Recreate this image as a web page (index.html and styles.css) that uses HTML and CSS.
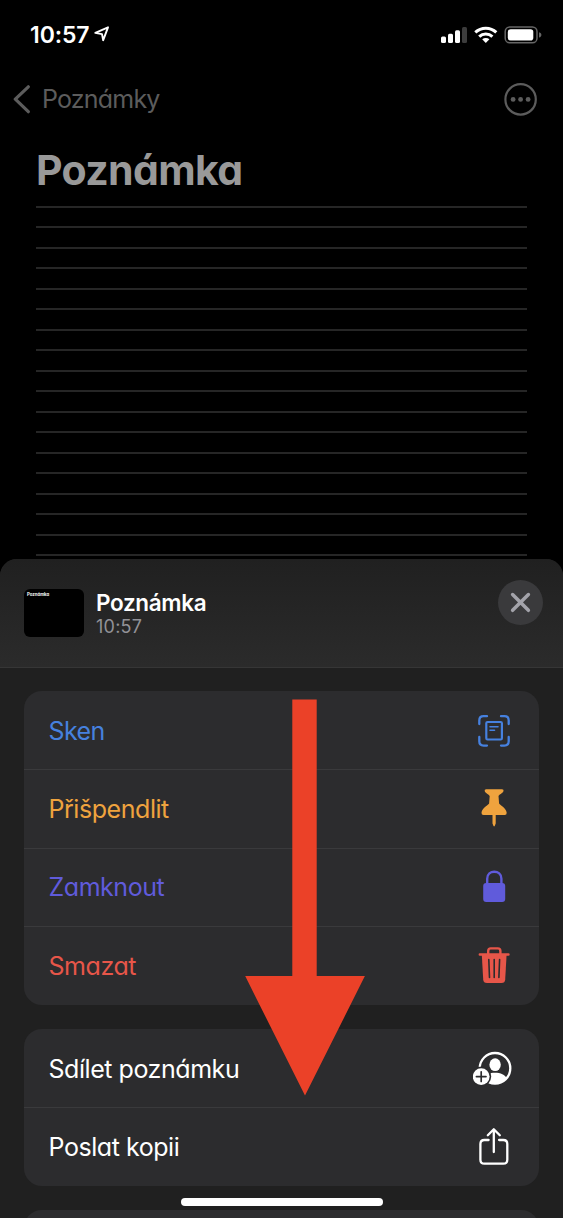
FILE: index.html
```html
<!DOCTYPE html>
<html lang="cs">
<head>
<meta charset="utf-8">
<title>Poznámka</title>
<link rel="stylesheet" href="styles.css">
</head>
<body>
<div class="phone">
  <header class="status">
    <div class="clock"><span class="time">10:57</span>
      <svg class="location" width="16" height="16" viewBox="0 0 16 16"><path d="M1.300 6.900 14 1.300 9.200 14.200 8 8.100Z" fill="none" stroke="#fff" stroke-width="1.900" stroke-linejoin="round"/></svg>
    </div>
    <svg width="104" height="20" viewBox="0 0 104 20">
      <g fill="#fff"><rect x="3" y="10.500" width="5" height="6.500" rx="1.500"/><rect x="10" y="7.700" width="5" height="9.300" rx="1.500"/><rect x="17" y="4.200" width="5" height="12.800" rx="1.500"/></g>
      <rect x="24" y="1" width="5" height="16" rx="1.500" fill="#3c3c3c"/>
      <g fill="none" stroke="#fff" stroke-width="3"><path d="M37.300 6.400a15.200 15.200 0 0 1 21 0"/><path d="M41.200 10.700a9.600 9.600 0 0 1 13.200 0"/></g>
      <path d="M44.200 13.300a5.300 5.300 0 0 1 7.200 0L47.800 17Z" fill="#fff"/>
      <rect x="67.200" y="1" width="31.800" height="15.800" rx="4.600" fill="none" stroke="#666" stroke-width="1.500"/>
      <rect x="69.800" y="3.300" width="25.500" height="11.300" rx="2.800" fill="#fff"/>
      <path d="M101 6.300c3.200 1 3.200 4.200 0 5.200Z" fill="#666"/>
    </svg>
  </header>
  <nav class="nav">
    <div class="back">
      <svg width="18" height="30" viewBox="0 0 18 30"><path d="M16.300 1.800 3.300 14.200l13 12.500" fill="none" stroke="#5c5c5c" stroke-width="3.200" stroke-linecap="round" stroke-linejoin="round"/></svg>
      <span class="back-label">Poznámky</span>
    </div>
    <svg width="34" height="34" viewBox="0 0 34 34"><circle cx="17.600" cy="16.400" r="15.200" fill="none" stroke="#5c5c5c" stroke-width="2.200"/><g fill="#5c5c5c"><circle cx="10.100" cy="16.400" r="2.400"/><circle cx="17.600" cy="16.400" r="2.400"/><circle cx="25.100" cy="16.400" r="2.400"/></g></svg>
  </nav>
  <main class="note">
    <h1 class="note-title">Poznámka</h1>
    <div class="lines"><i></i><i></i><i></i><i></i><i></i><i></i><i></i><i></i><i></i><i></i><i></i><i></i><i></i><i></i><i></i><i></i><i></i><i></i></div>
  </main>
  <section class="sheet">
    <div class="sheet-head">
      <div class="thumb">Poznámka</div>
      <div class="meta"><div class="meta-title">Poznámka</div><div class="meta-time">10:57</div></div>
      <div class="close"><svg width="45" height="45" viewBox="0 0 45 45"><path d="m14.600 14.500 15.800 15.800m0-15.800L14.600 30.300" stroke="#a3a3aa" stroke-width="3.500" stroke-linecap="round"/></svg></div>
    </div>
    <div class="cards">
      <div class="card">
        <div class="row blue"><span class="sken">Sken</span>
          <svg width="42" height="42" viewBox="0 0 42 42" fill="none" stroke="currentColor" stroke-linecap="round"><path d="M6.300 14v-3.500q0-4.300 4.300-4.300H14M28 6.200h3.400q4.300 0 4.300 4.300V14M35.700 27v4.300q0 4.300-4.300 4.300H28M14 35.600h-3.400q-4.300 0-4.300-4.300V27" stroke-width="2.300"/><rect x="13.300" y="12" width="15.600" height="17.500" rx="1.200" stroke-width="2.200"/><path d="M17 16.700h8M17 20.200h4.500" stroke-width="1.600"/></svg></div>
        <div class="row orange"><span class="pin">Přišpendlit</span>
          <svg width="42" height="42" viewBox="0 0 42 42" fill="currentColor"><path d="M13.200 1.200H29q2 0 1.500 1.900c-.5 2.100-4.200 3.500-5 4.900l.6 7.600c.3 1.400 7.300 4.300 7.600 9.200q.1 2.200-2 2.200H10.500q-2.100 0-2-2.200c.3-4.900 7.300-7.800 7.600-9.200l.6-7.600c-.8-1.400-4.500-2.800-5-4.900q-.500-1.900 1.500-1.900ZM19.500 27h3.200v8.600l-1 2.500q-.6.800-1.200 0l-1-2.500Z"/></svg></div>
        <div class="row purple"><span class="lock">Zamknout</span>
          <svg width="42" height="42" viewBox="0 0 42 42"><rect x="10.200" y="17" width="22" height="19" rx="3" fill="currentColor"/><path d="M14.200 18v-5.200c0-9.400 14.200-9.400 14.200 0V18" fill="none" stroke="currentColor" stroke-width="2.400"/></svg></div>
        <div class="row red"><span class="trash">Smazat</span>
          <svg width="42" height="42" viewBox="0 0 42 42"><path d="M6.800 9.500h28.700M15.200 8.500V6q0-2.600 2.600-2.600h7q2.600 0 2.600 2.600v2.500" fill="none" stroke="currentColor" stroke-width="2.400" stroke-linecap="round"/><path d="M8.800 9.500h24.800l-1.400 25q-.2 3.500-3.800 3.500H14q-3.600 0-3.800-3.500Z" fill="currentColor"/><path d="m15.800 14.500.7 18M21.200 14.500v18M26.600 14.500l-.7 18" stroke="#2c2c2e" stroke-width="1.600" stroke-linecap="round"/></svg></div>
      </div>
      <div class="card">
        <div class="row white"><span class="share">Sdílet poznámku</span>
          <svg width="42" height="42" viewBox="0 0 42 42"><circle cx="22" cy="20.300" r="15.300" fill="none" stroke="#fff" stroke-width="2.300"/><ellipse cx="22.100" cy="16.700" rx="5.700" ry="6.400" fill="#fff"/><path d="M10.500 30.500c2-7.600 21-7.600 23 0-5.400 7.200-17.600 7.200-23 0Z" fill="#fff"/><circle cx="8.200" cy="28.600" r="10" fill="#2c2c2e"/><circle cx="8.200" cy="28.600" r="8.400" fill="#fff"/><path d="M3.400 28.600H13M8.200 23.800v9.600" stroke="#2c2c2e" stroke-width="1.700" stroke-linecap="round"/></svg></div>
        <div class="row white"><span class="send">Poslat kopii</span>
          <svg width="42" height="42" viewBox="0 0 42 42" fill="none" stroke="#fff" stroke-width="2.300" stroke-linecap="round" stroke-linejoin="round"><path d="M15.600 14h-4.200q-4 0-4 4v15.700q0 4 4 4h18.900q4 0 4-4V18q0-4-4-4h-4.200M20.800 26V3.500M14.800 9.300l6-6 6 6"/></svg></div>
      </div>
      <div class="card"><div class="row"></div></div>
    </div>
  </section>
  <svg class="arrow" width="120" height="398" viewBox="0 0 120 398"><path d="M47.300.500h24.400v276.600h48.200L60 396.500.200 277.100h47.100Z" fill="#eb4128"/></svg>
  <div class="home"></div>
</div>
</body>
</html>
```
FILE: styles.css
```css
* { box-sizing: border-box; }
body { margin: 0; background: #000; }
.phone { position: relative; width: 563px; height: 1218px; overflow: hidden; background: #000; color: #fff; display: flex; flex-direction: column; font-family: Inter, "Liberation Sans", sans-serif; font-feature-settings: "cv11", "ss03"; }
.phone svg { display: block; flex: none; }
.status { flex: none; height: 70px; display: flex; align-items: flex-start; justify-content: space-between; padding: 22px 21px 0 30px; }
.status > svg { margin-top: 4px; }
.clock { display: flex; gap: 5px; height: 26px; align-items: center; }
.time { font-size: 23px; font-weight: 600; line-height: 26px; letter-spacing: -.1px; }
.location { margin-top: -2px; }
.nav { flex: none; height: 60px; display: flex; align-items: center; justify-content: space-between; padding: 0 26px 0 12px; }
.back { display: flex; align-items: center; gap: 12px; }
.back-label { margin-top: -2px; color: #5c5c5c; font-size: 25px; line-height: 30px; letter-spacing: -.8px; }
.note { flex: none; height: 429px; padding: 15px 36px 0; }
.note-title { margin: 0; height: 61px; font-size: 41px; line-height: 50px; font-weight: 700; letter-spacing: -.65px; color: #999; }
.lines { height: 350px; display: flex; flex-direction: column; justify-content: space-between; }
.lines i { flex: none; height: 2px; background: #262626; }
.sheet { flex: none; height: 659px; border-radius: 17px 17px 0 0; background: #202020; overflow: hidden; display: flex; flex-direction: column; }
.sheet-head { flex: none; height: 109px; background: linear-gradient(#202020, #2b2b2b); border-bottom: 1px solid #363636; display: flex; align-items: flex-start; padding: 0 20px 0 24px; }
.thumb { margin-top: 30px; width: 60px; height: 48px; border-radius: 6px; background: #000; font-size: 4.300px; font-weight: 700; line-height: 5px; padding: 3px; }
.meta { margin: 30px auto 0 12px; }
.meta-title { font-size: 22.5px; font-weight: 600; line-height: 28px; letter-spacing: -.35px; font-feature-settings: normal; }
.meta-time { font-size: 18px; line-height: 20px; letter-spacing: .25px; color: #929297; }
.close { margin-top: 20.500px; width: 45px; height: 45px; border-radius: 50%; background: #3a3a3c; }
.cards { flex: none; padding: 23px 24px 0; display: flex; flex-direction: column; gap: 24.300px; }
.card { flex: none; border-radius: 18px; background: #2c2c2e; overflow: hidden; }
.row { height: 78.400px; display: flex; align-items: center; justify-content: space-between; padding: 1px 24.500px 0 24.500px; font-size: 25px; line-height: 30px; letter-spacing: -.45px; }
.row + .row { border-top: 1px solid #3a3a3c; padding-top: 0; }
.sken { letter-spacing: -.6px; }
.blue { color: #4681df; }
.orange { color: #efa33e; }
.purple { color: #605bdb; }
.red { color: #e75649; }
.white { color: #fff; }
.arrow { position: absolute; left: 245px; top: 699px; }
.home { position: absolute; left: 181px; top: 1198px; width: 202px; height: 8px; border-radius: 4px; background: #fff; }
```
